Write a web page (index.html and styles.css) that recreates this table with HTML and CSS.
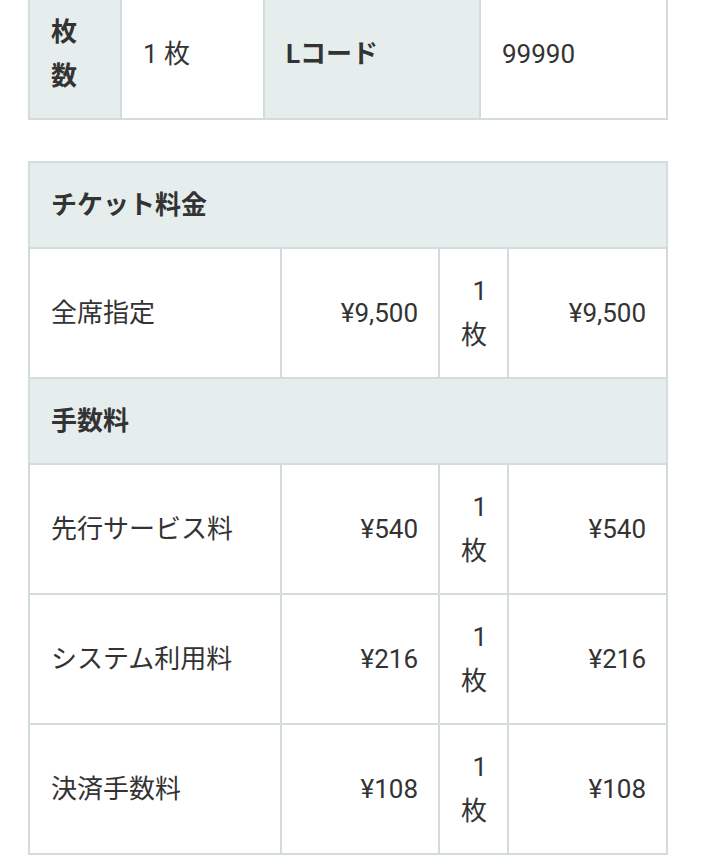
FILE: index.html
```html
<!DOCTYPE html>
<html lang="ja">
<head>
<meta charset="utf-8">
<link rel="stylesheet" href="styles.css">
</head>
<body>
<main class="page">
  <table class="tbl info">
    <colgroup>
      <col class="c-h1"><col class="c-v1"><col class="c-h2"><col class="c-v2">
    </colgroup>
    <tr>
      <th class="narrow">枚数</th>
      <td>1 枚</td>
      <th>Lコード</th>
      <td>99990</td>
    </tr>
  </table>

  <table class="tbl fees">
    <colgroup>
      <col class="c-name"><col class="c-price"><col class="c-qty"><col class="c-total">
    </colgroup>
    <tr><th colspan="4">チケット料金</th></tr>
    <tr>
      <td>全席指定</td>
      <td class="num">¥9,500</td>
      <td class="num">1 枚</td>
      <td class="num">¥9,500</td>
    </tr>
    <tr><th colspan="4">手数料</th></tr>
    <tr>
      <td>先行サービス料</td>
      <td class="num">¥540</td>
      <td class="num">1 枚</td>
      <td class="num">¥540</td>
    </tr>
    <tr>
      <td>システム利用料</td>
      <td class="num">¥216</td>
      <td class="num">1 枚</td>
      <td class="num">¥216</td>
    </tr>
    <tr>
      <td>決済手数料</td>
      <td class="num">¥108</td>
      <td class="num">1 枚</td>
      <td class="num">¥108</td>
    </tr>
  </table>
</main>
</body>
</html>
```

FILE: styles.css
```css
html, body {
  margin: 0;
  padding: 0;
  background: #ffffff;
}

body {
  font-family: "Roboto", "Noto Sans CJK JP", sans-serif;
  font-size: 26px;
  line-height: 44px;
  color: #333333;
}

.page {
  padding: 0 40px 0 28px;
  margin-top: -12px;
}

.tbl {
  width: 638px;
  border-collapse: collapse;
  table-layout: fixed;
  border: 2px solid #d3dcdc;
}

.tbl th,
.tbl td {
  border: 2px solid #d3dcdc;
  padding: 20px 20px 20px 21px;
  text-align: left;
  vertical-align: middle;
  font-weight: 400;
}

.tbl th {
  background: #e6eded;
  font-weight: 700;
}

.info .c-h1 { width: 92px; }
.info .c-v1 { width: 143px; }
.info .c-h2 { width: 216px; }
.info .c-v2 { width: 187px; }

.fees {
  margin-top: 41px;
}

.fees .c-name { width: 252px; }
.fees .c-price { width: 158px; }
.fees .c-qty { width: 69px; }
.fees .c-total { width: 159px; }

.tbl td.num {
  text-align: right;
  padding-left: 20px;
  padding-right: 20px;
}
```
